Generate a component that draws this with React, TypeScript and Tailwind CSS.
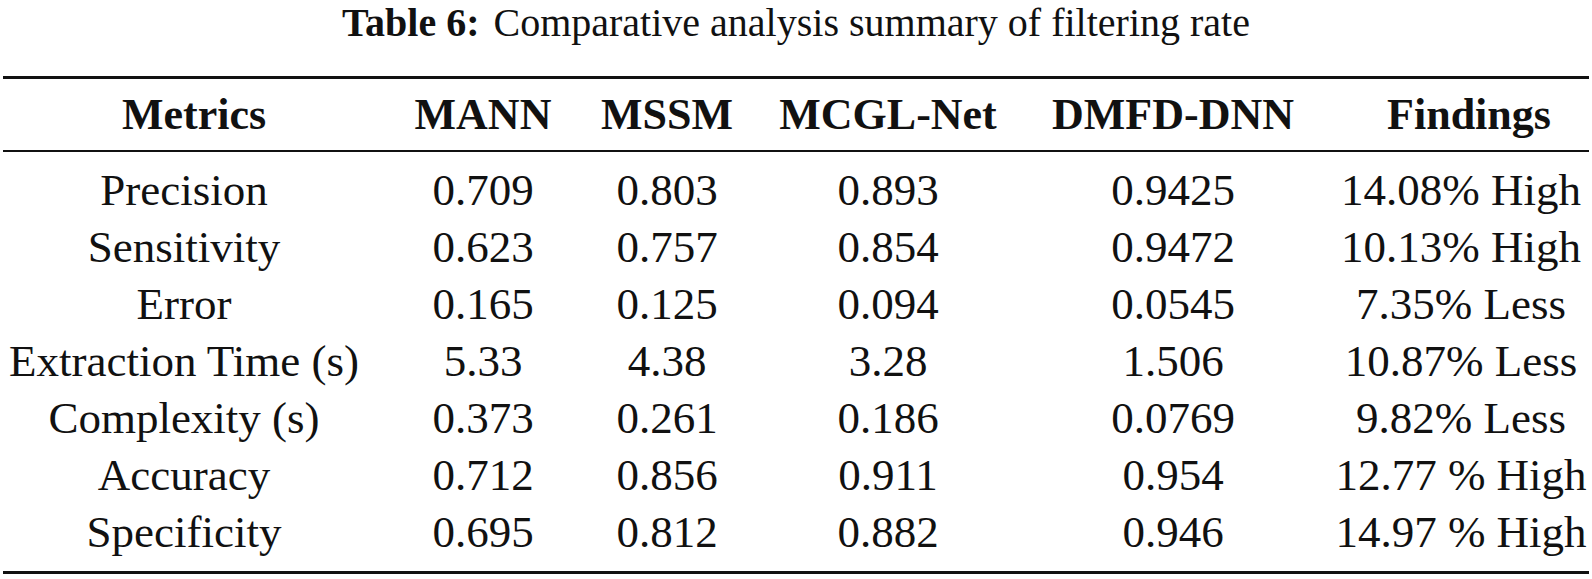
import React from 'react';

type Row = {
  metric: string;
  mann: string;
  mssm: string;
  mcgl: string;
  dmfd: string;
  finding: string;
};

const rows: Row[] = [
  { metric: 'Precision', mann: '0.709', mssm: '0.803', mcgl: '0.893', dmfd: '0.9425', finding: '14.08% High' },
  { metric: 'Sensitivity', mann: '0.623', mssm: '0.757', mcgl: '0.854', dmfd: '0.9472', finding: '10.13% High' },
  { metric: 'Error', mann: '0.165', mssm: '0.125', mcgl: '0.094', dmfd: '0.0545', finding: '7.35% Less' },
  { metric: 'Extraction Time (s)', mann: '5.33', mssm: '4.38', mcgl: '3.28', dmfd: '1.506', finding: '10.87% Less' },
  { metric: 'Complexity (s)', mann: '0.373', mssm: '0.261', mcgl: '0.186', dmfd: '0.0769', finding: '9.82% Less' },
  { metric: 'Accuracy', mann: '0.712', mssm: '0.856', mcgl: '0.911', dmfd: '0.954', finding: '12.77 % High' },
  { metric: 'Specificity', mann: '0.695', mssm: '0.812', mcgl: '0.882', dmfd: '0.946', finding: '14.97 % High' },
];

const grid = 'grid grid-cols-[368px_230px_138px_304px_290px_1fr]';

export default function App() {
  return (
    <div className="w-[1592px] h-[579px] bg-white text-[#111] font-['Liberation_Serif',serif] overflow-hidden">
      <div className="h-[76px] text-center text-[40px] leading-[46px] whitespace-nowrap">
        <span className="font-bold">Table 6:</span>
        <span className="ml-[14px]">Comparative analysis summary of filtering rate</span>
      </div>
      <div className="mx-[3px] border-t-[3px] border-[#111]" />
      <div className={`${grid} h-[71px] items-center text-[44px] font-bold leading-[50px]`}>
        <div className="text-center pl-[20px]">Metrics</div>
        <div className="text-center">MANN</div>
        <div className="text-center">MSSM</div>
        <div className="text-center">MCGL-Net</div>
        <div className="text-center pr-[24px]">DMFD-DNN</div>
        <div className="text-center pl-[16px]">Findings</div>
      </div>
      <div className="mx-[3px] border-t-[2px] border-[#111]" />
      <div className="py-[10px] text-[45px] leading-[57px]">
        {rows.map((r) => (
          <div key={r.metric} className={grid}>
            <div className="text-center whitespace-nowrap">{r.metric}</div>
            <div className="text-center">{r.mann}</div>
            <div className="text-center">{r.mssm}</div>
            <div className="text-center">{r.mcgl}</div>
            <div className="text-center pr-[24px]">{r.dmfd}</div>
            <div className="text-center whitespace-nowrap">{r.finding}</div>
          </div>
        ))}
      </div>
      <div className="mx-[3px] border-t-[3px] border-[#111]" />
    </div>
  );
}
